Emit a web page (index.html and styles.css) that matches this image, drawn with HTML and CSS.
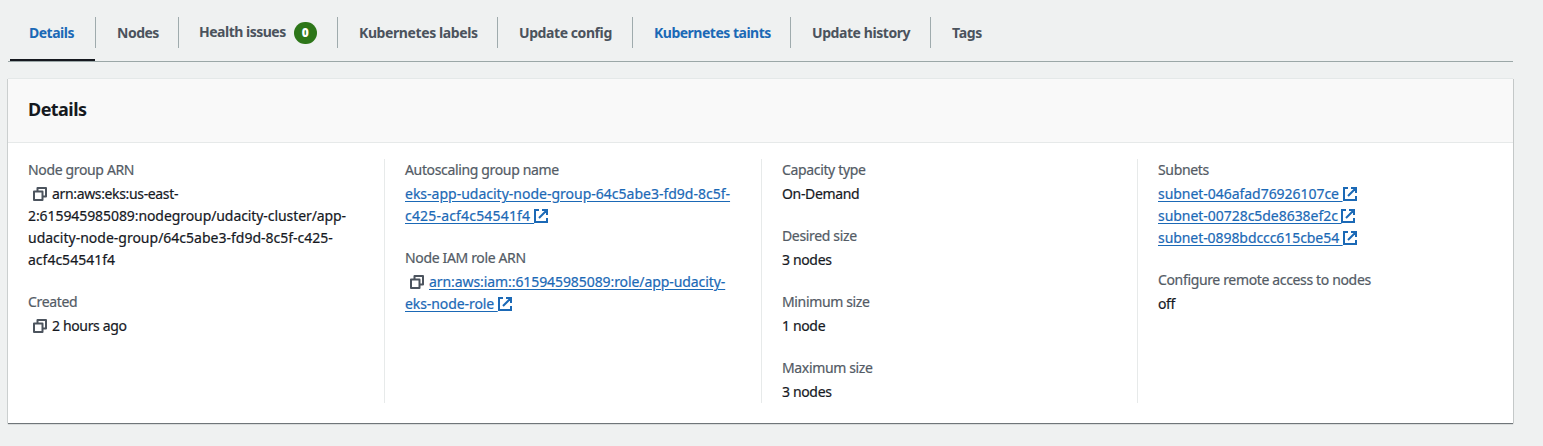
FILE: index.html
```html
<!DOCTYPE html>
<html lang="en">
<head>
<meta charset="utf-8">
<title>Node group details</title>
<link rel="stylesheet" href="styles.css">
</head>
<body>
<svg class="sprite" aria-hidden="true">
  <symbol id="copy" viewBox="0 0 14 14"><path d="M1 4.5h8.5V13H1zM4.5 4V1H13v8.5h-3" fill="none" stroke="currentColor" stroke-width="2" stroke-linejoin="round"/></symbol>
  <symbol id="external" viewBox="0 0 14 14"><path d="M5 1H1v12h12V9M8 1h5v5M13 1L5 9" fill="none" stroke="currentColor" stroke-width="2"/></symbol>
</svg>
<nav class="tabs">
  <a class="tab tab-details active"><span>Details</span></a>
  <a class="tab tab-nodes"><span>Nodes</span></a>
  <a class="tab tab-health"><span>Health issues</span><b class="badge">0</b></a>
  <a class="tab tab-labels"><span>Kubernetes labels</span></a>
  <a class="tab tab-config"><span>Update config</span></a>
  <a class="tab tab-taints hovered"><span>Kubernetes taints</span></a>
  <a class="tab tab-history"><span>Update history</span></a>
  <a class="tab tab-tags"><span>Tags</span></a>
</nav>
<section class="panel">
  <header class="panel-header"><h2>Details</h2></header>
  <div class="columns">
    <div class="column">
      <dl><dt>Node group ARN</dt><dd><svg class="copy"><use href="#copy"/></svg>arn:aws:eks:us-east-<br><span class="arn">2:615945985089:nodegroup/udacity-cluster/app-</span><br><span class="identifier">udacity-node-group/64c5abe3-fd9d-8c5f-c425-</span><br><span class="identifier">acf4c54541f4</span></dd></dl>
      <dl><dt>Created</dt><dd><svg class="copy"><use href="#copy"/></svg>2 hours ago</dd></dl>
    </div>
    <div class="column">
      <dl><dt>Autoscaling group name</dt><dd><a class="link identifier">eks-app-udacity-node-group-64c5abe3-fd9d-8c5f-<br><span class="suffix">c425-acf4c54541f4 </span><svg class="external"><use href="#external"/></svg></a></dd></dl>
      <dl><dt>Node IAM role ARN</dt><dd><svg class="copy"><use href="#copy"/></svg><a class="link arn">arn:aws:iam::615945985089:role/app-udacity-<br>eks-node-role <svg class="external"><use href="#external"/></svg></a></dd></dl>
    </div>
    <div class="column">
      <dl><dt>Capacity type</dt><dd>On-Demand</dd></dl>
      <dl><dt>Desired size</dt><dd>3 nodes</dd></dl>
      <dl><dt>Minimum size</dt><dd>1 node</dd></dl>
      <dl><dt>Maximum size</dt><dd>3 nodes</dd></dl>
    </div>
    <div class="column">
      <dl><dt>Subnets</dt><dd class="subnets"><a class="link">subnet-046afad76926107ce <svg class="external"><use href="#external"/></svg></a><a class="link">subnet-00728c5de8638ef2c <svg class="external"><use href="#external"/></svg></a><a class="link last">subnet-0898bdccc615cbe54 <svg class="external"><use href="#external"/></svg></a></dd></dl>
      <dl><dt>Configure remote access to nodes</dt><dd>off</dd></dl>
    </div>
  </div>
</section>
</body>
</html>
```
FILE: styles.css
```css
* { box-sizing: border-box; }
body {
  margin: 0;
  padding: 0 30px 0 8px;
  height: 446px;
  overflow: hidden;
  background: #eff1f1;
  color: #16191f;
  font: 14px/22px "Noto Sans", sans-serif;
  letter-spacing: -0.35px;
}
.sprite { position: absolute; width: 0; height: 0; }
.tabs {
  display: flex;
  height: 62px;
  padding: 17px 0 0 2px;
  border-bottom: 1px solid #9ba7a7;
}
.tab {
  display: flex;
  align-items: center;
  height: 31px;
  padding-left: 21px;
  border-right: 1px solid #9fabad;
  color: #4b535d;
  font-weight: 700;
  letter-spacing: -0.5px;
  white-space: nowrap;
}
.tab-details { width: 86px; padding-left: 19px; }
.tab-nodes { width: 83px; }
.tab-health { width: 159px; padding-left: 20px; }
.tab-health span { margin-top: -2px; }
.tab-labels { width: 160px; letter-spacing: -0.4px; }
.tab-config { width: 135px; letter-spacing: -0.42px; }
.tab-taints { width: 158px; }
.tab-history { width: 140px; letter-spacing: -0.43px; }
.tab-tags { border-right: 0; letter-spacing: -0.3px; }
.active, .hovered { color: #1b69b6; }
.active { position: relative; }
.active::after {
  content: "";
  position: absolute;
  left: 0;
  right: 0;
  bottom: -13px;
  height: 2px;
  background: #16191f;
}
.badge {
  display: grid;
  place-items: center;
  width: 23px;
  height: 22px;
  margin-left: 8px;
  border-radius: 11px;
  background: #2d7619;
  color: #fff;
  font-size: 12px;
  letter-spacing: 0;
}
.panel {
  height: 344px;
  margin-top: 17px;
  background: #fff;
  box-shadow: 0 -1px 0 #e4e8e8, -1px 0 0 #cbcfcf, 1px 0 0 #c4c8c8, 0 1px 1px #6f7579;
}
.panel-header {
  height: 64px;
  padding: 19px 20px 0;
  background: #f9f9f9;
  border-bottom: 1px solid #e6e9e9;
}
h2 { margin: 0; font-size: 18px; line-height: 22px; letter-spacing: -0.55px; }
.columns {
  display: grid;
  grid-template-columns: 376px 377px 376px 376px;
  height: 260px;
  padding-top: 16px;
}
.column {
  display: flex;
  flex-direction: column;
  gap: 20px;
  height: 244px;
  padding-left: 20px;
  white-space: nowrap;
}
.column + .column { border-left: 1px solid #e7eaea; }
dl, dd { margin: 0; }
dt { margin-bottom: 2px; color: #535b65; }
dt, dd { -webkit-text-stroke: 0.2px currentColor; }
.arn { letter-spacing: -0.08px; }
.identifier { letter-spacing: 0; }
.suffix { letter-spacing: 0.18px; }
svg { width: 14px; height: 14px; vertical-align: -2px; }
.copy { margin: 0 5px; color: #4c545e; }
.link { color: #1b69b6; text-decoration: underline; text-underline-offset: 2px; }
.subnets { display: grid; justify-items: start; letter-spacing: -0.04px; }
.subnets .last { letter-spacing: -0.07px; }
```
